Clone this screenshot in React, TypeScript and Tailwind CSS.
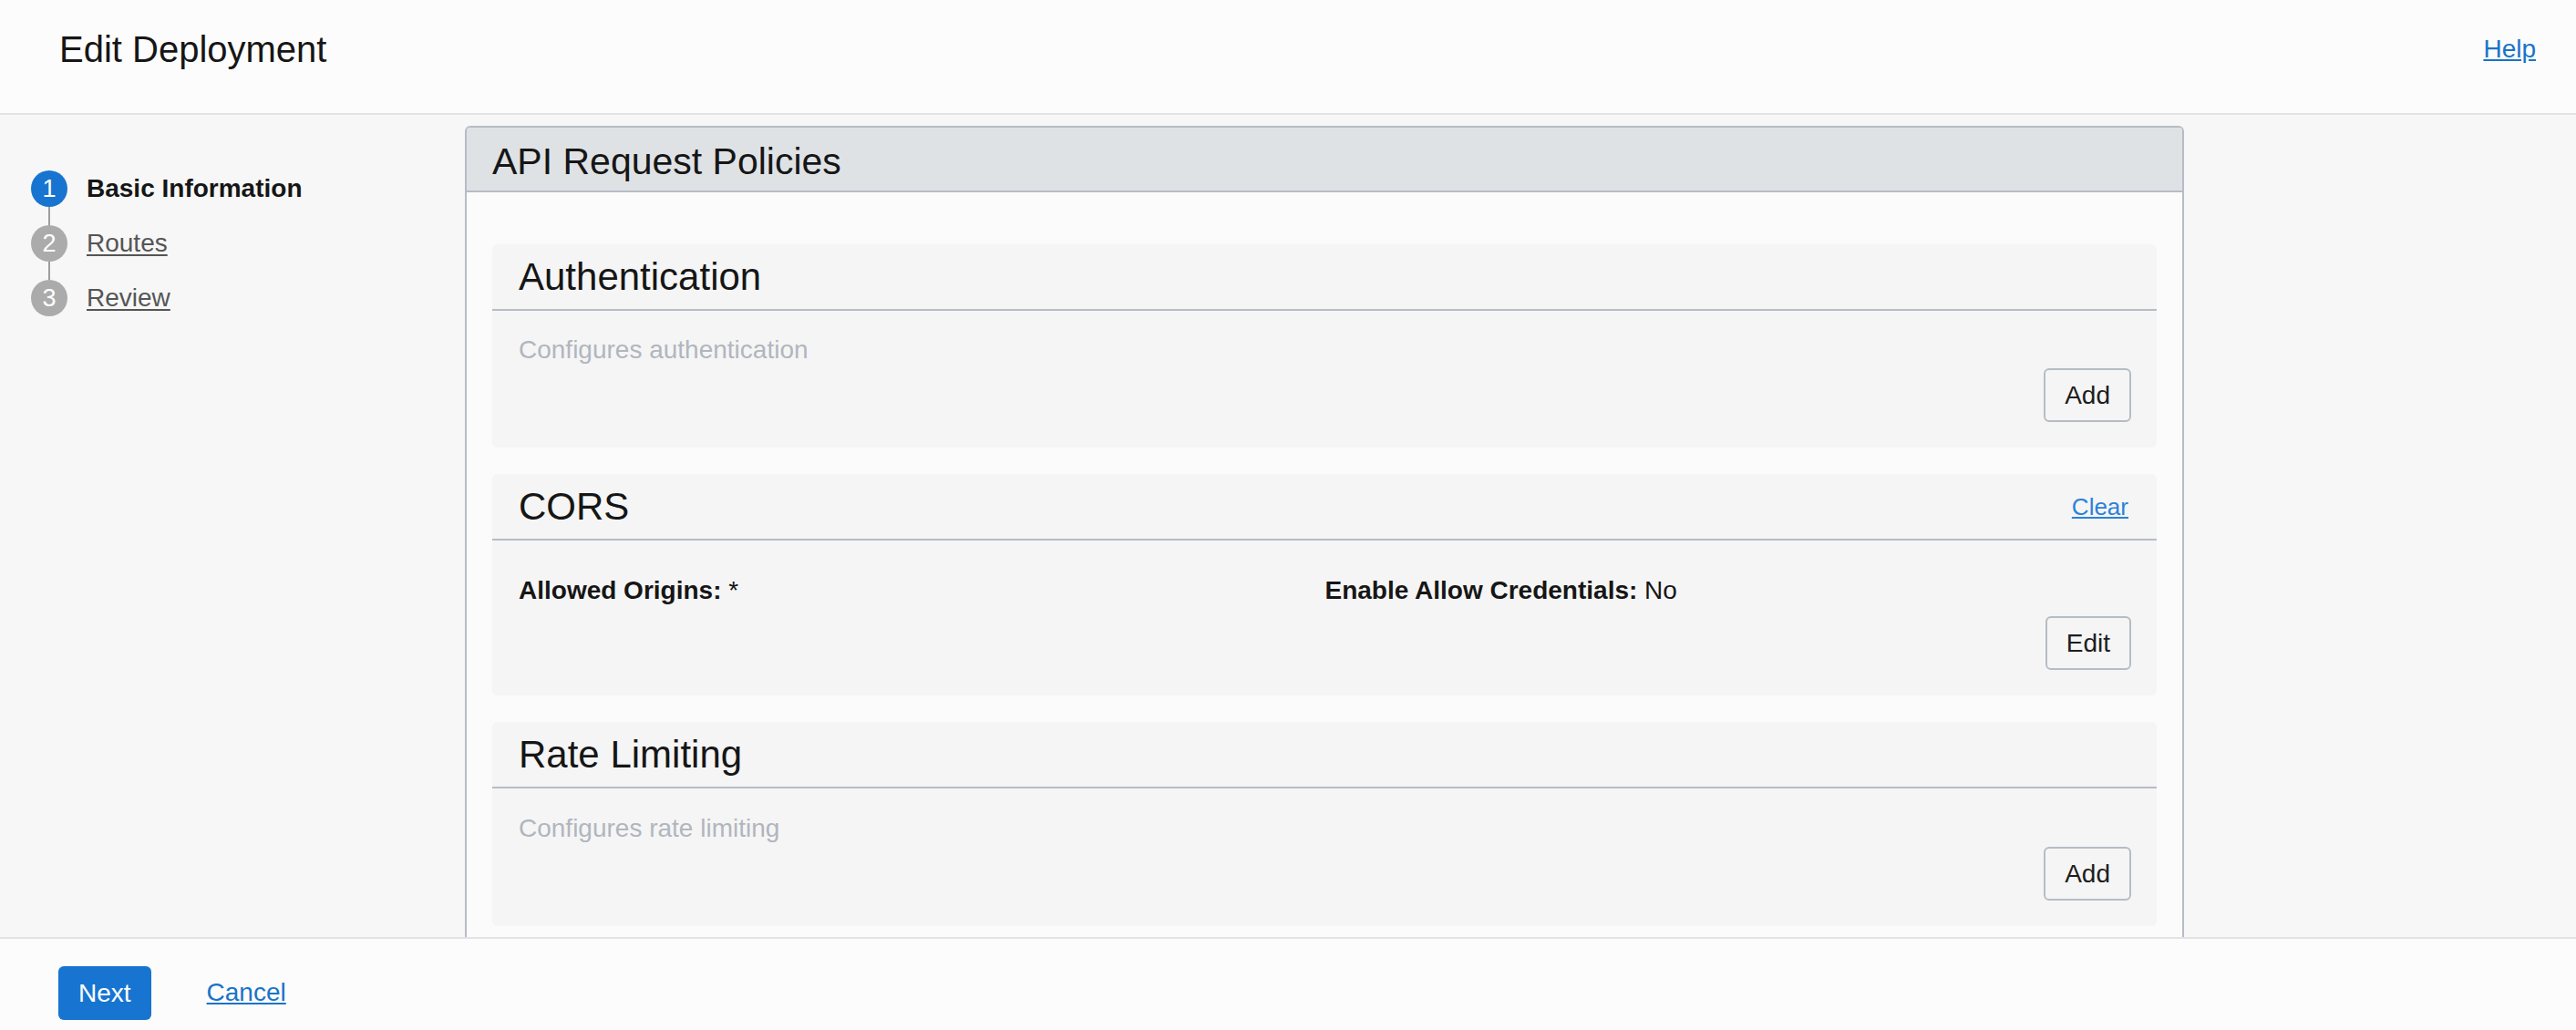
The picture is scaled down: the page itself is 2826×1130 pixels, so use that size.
import React from "react";

function Step({ n, label, active }: { n: number; label: string; active?: boolean }) {
  return (
    <div className="flex items-center h-[40px]">
      <div
        className={
          "w-[40px] h-[40px] rounded-full flex items-center justify-center text-white text-[27px] leading-none " +
          (active ? "bg-[#1775d1]" : "bg-[#ababab]")
        }
      >
        {n}
      </div>
      <span
        className={
          "ml-[21px] text-[28px] leading-[32px] " +
          (active ? "font-bold text-[#161616]" : "text-[#555555] underline underline-offset-[3px]")
        }
      >
        {label}
      </span>
    </div>
  );
}

function Connector() {
  return <div className="ml-[19px] w-[2px] h-[20px] bg-[#9e9e9e]" />;
}

function Btn({ children }: { children: React.ReactNode }) {
  return (
    <button className="h-[59px] px-[21px] border-2 border-[#b6bcc5] rounded-[6px] bg-[#f5f5f5] text-[28px] leading-none text-[#1e1e1e]">
      {children}
    </button>
  );
}

function Card({
  title,
  right,
  children,
}: {
  title: string;
  right?: React.ReactNode;
  children: React.ReactNode;
}) {
  return (
    <div className="bg-[#f5f5f5] rounded-[6px]">
      <div className="h-[73px] border-b-2 border-[#b6bcc5] flex items-center justify-between pl-[29px] pr-[31px]">
        <h2 className="text-[42px] leading-[50px] text-[#161616]">{title}</h2>
        {right}
      </div>
      <div className="pl-[29px] pr-[28px]">{children}</div>
    </div>
  );
}

export default function App() {
  return (
    <div
      className="w-[2826px] h-[1130px] flex flex-col overflow-hidden bg-[#f7f7f7]"
      style={{ fontFamily: '"Liberation Sans", Arial, Helvetica, sans-serif' }}
    >
      {/* Header */}
      <header className="h-[126px] shrink-0 bg-[#fcfcfc] border-b-2 border-[#e3e3e3] flex justify-between pl-[65px] pr-[44px]">
        <h1 className="pt-[30px] text-[40px] leading-[48px] text-[#161616]">Edit Deployment</h1>
        <a href="#" className="pt-[38px] text-[28px] leading-[32px] text-[#1a73c8] underline h-fit">
          Help
        </a>
      </header>

      {/* Main */}
      <main className="flex-1 min-h-0 flex overflow-hidden">
        <aside className="w-[510px] shrink-0 pt-[61px] pl-[34px]">
          <Step n={1} label="Basic Information" active />
          <Connector />
          <Step n={2} label="Routes" />
          <Connector />
          <Step n={3} label="Review" />
        </aside>

        <section className="w-[1886px] shrink-0 mt-[12px] h-fit border-2 border-[#b6bcc5] rounded-t-[6px] bg-[#fbfbfb]">
          <div className="h-[71px] bg-[#dfe2e5] border-b-2 border-[#b6bcc5] rounded-t-[4px] pl-[28px] pt-[13px]">
            <h2 className="text-[41px] leading-[48px] text-[#161616]">API Request Policies</h2>
          </div>
          <div className="px-[28px] pt-[57px] pb-[60px] flex flex-col gap-[29px]">
            <Card title="Authentication">
              <p className="pt-[27px] text-[28px] leading-[32px] text-[#b1b6be]">Configures authentication</p>
              <div className="flex justify-end pt-[4px] pb-[28px]">
                <Btn>Add</Btn>
              </div>
            </Card>

            <Card
              title="CORS"
              right={
                <a href="#" className="text-[26px] leading-[30px] text-[#2b82d9] underline">
                  Clear
                </a>
              }
            >
              <div className="pt-[39px] grid grid-cols-2 text-[28px] leading-[32px] text-[#161616]">
                <div>
                  <span className="font-bold">Allowed Origins:</span> *
                </div>
                <div>
                  <span className="font-bold">Enable Allow Credentials:</span> No
                </div>
              </div>
              <div className="flex justify-end pt-[12px] pb-[28px]">
                <Btn>Edit</Btn>
              </div>
            </Card>

            <Card title="Rate Limiting">
              <p className="pt-[28px] text-[28px] leading-[32px] text-[#b1b6be]">Configures rate limiting</p>
              <div className="flex justify-end pt-[4px] pb-[28px]">
                <Btn>Add</Btn>
              </div>
            </Card>
          </div>
        </section>
      </main>

      {/* Footer */}
      <footer className="h-[102px] shrink-0 bg-[#fcfcfc] border-t-2 border-[#e3e3e3] flex items-start pt-[30px] pl-[64px]">
        <button className="h-[59px] px-[22px] rounded-[6px] bg-[#1775d1] text-white text-[28px] leading-none">
          Next
        </button>
        <a href="#" className="ml-[61px] mt-[13px] text-[28px] leading-[32px] text-[#1a73c8] underline">
          Cancel
        </a>
      </footer>
    </div>
  );
}
